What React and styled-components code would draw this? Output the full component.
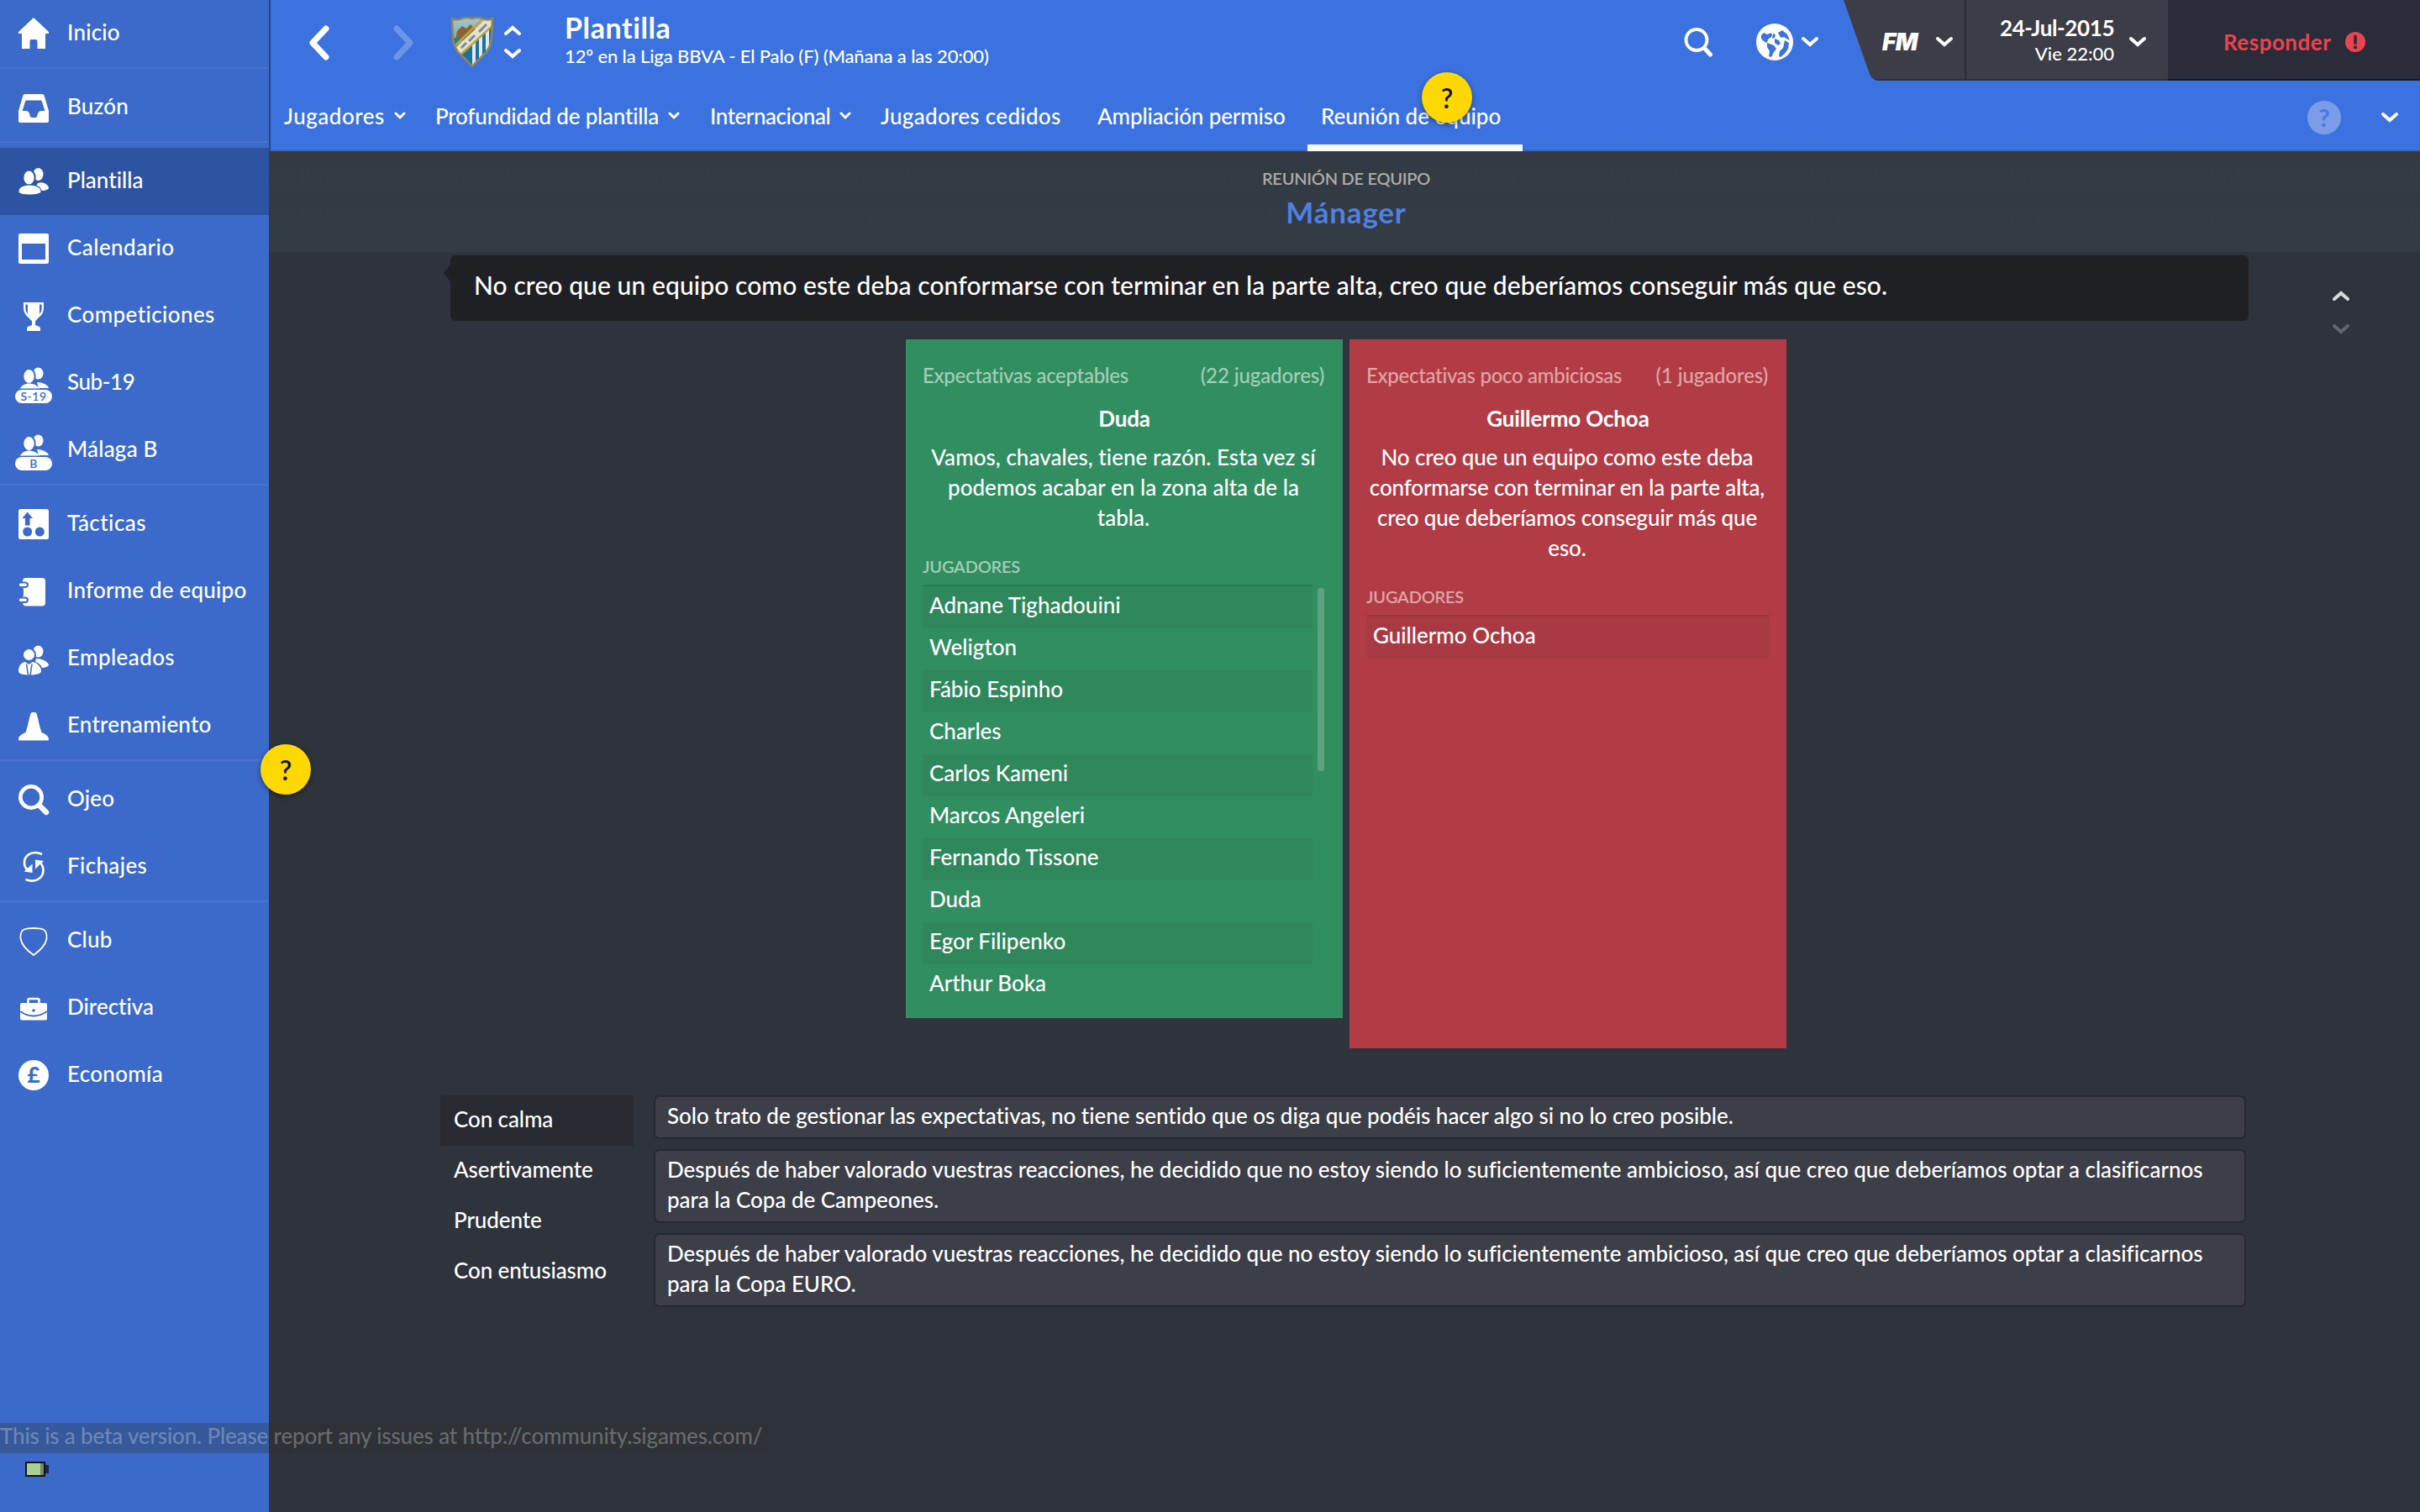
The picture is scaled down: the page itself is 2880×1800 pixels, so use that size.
import React from 'react'
import styled, { createGlobalStyle, css } from 'styled-components'


const BLUE = '#3b6acb'

const GlobalStyle = createGlobalStyle`
  * {
    box-sizing: border-box;
  }
  body {
    margin: 0;
    background: #2f333c;
    color: #fff;
    font-family: Lato, "Open Sans", sans-serif;
    font-size: 26px;
    font-weight: 500;
    font-variant-ligatures: none;
  }
  svg {
    display: block;
    flex: none;
  }
`;

const Screen = styled.div`
  position: relative;
  display: flex;
  width: 2880px;
  height: 1800px;
  overflow: hidden;
  background: #2f333c;
`;

/* ---------- sidebar ---------- */

const Sidebar = styled.nav`
  display: flex;
  flex-direction: column;
  width: 320px;
  flex: none;
  background: ${BLUE};
`;

const Group = styled.div`
  margin-bottom: 6px;
  border-bottom: 2px solid ${p => (p.$last ? 'transparent' : '#4873ce')};
`;

const Item = styled.a`
  --cut: ${p => (p.$active ? '#2d54a2' : BLUE)};
  display: flex;
  align-items: center;
  gap: 16px;
  height: 80px;
  padding-left: 16px;
  background: ${p => (p.$active ? '#2d54a2' : 'transparent')};
`;

const ItemLabel = styled.span`
  line-height: 77px;
  padding-bottom: 3px;
  letter-spacing: ${p => p.$track ?? 0.2}px;
  white-space: nowrap;
`;

const Foot = styled.div`
  margin-top: auto;
  padding: 0 0 42px 30px;
`;

/* ---------- header ---------- */

const Main = styled.main`
  display: flex;
  flex-direction: column;
  flex: 1;
`;

const Header = styled.header`
  height: 180px;
  background: #3c72df;
  border-left: 2px solid #2a4679;
  box-shadow: inset 0 -2px 0 #3c68b8;
`;

const TopRow = styled.div`
  display: flex;
  height: 96px;
  padding-left: 46px;
`;

const NavArrows = styled.div`
  display: flex;
  align-items: center;
  gap: 76px;
  height: 102px;
`;

const Spinner = styled.div`
  display: flex;
  flex-direction: column;
  gap: 16px;
  margin-left: 12px;
  padding-top: 30px;
`;

const CrestBox = styled.div`
  margin-left: 44px;
  padding-top: 19px;
`;

const TitleBlock = styled.div`
  margin-left: 52px;
  padding-top: 13px;
`;

const Title = styled.h1`
  margin: 0;
  font-size: 34px;
  font-weight: 700;
  line-height: 40px;
  letter-spacing: 0.6px;
`;

const Subtitle = styled.div`
  margin-top: 1px;
  font-size: 22px;
  line-height: 26px;
  letter-spacing: -0.13px;
`;

const Tools = styled.div`
  display: flex;
  align-items: center;
  height: 100px;
  margin-left: auto;
  margin-right: 30px;
`;

const Globe = styled.div`
  margin: 0 10px 0 52px;
`;

const Corner = styled.div`
  display: flex;
  width: 686px;
  height: 96px;
  clip-path: path('M0 0 L31 88 Q34 96 43 96 H686 V0 Z');
`;

const CornerCell = styled.div`
  display: flex;
  align-items: center;
  padding-top: 3px;
  width: ${p => p.$width}px;
  padding-left: ${p => p.$left}px;
  background: ${p => (p.$dark ? '#2a2c39' : '#3c3d46')};
  box-shadow: inset 0 -2px 0 ${p => (p.$dark ? '#14172a' : '#2b2f40')};
  border-right: ${p => (p.$divider ? '2px solid #2b2c33' : 'none')};
`;

const FmMark = styled.span`
  width: 64px;
  font-family: Inter, sans-serif;
  font-size: 28px;
  font-weight: 900;
  font-style: italic;
  letter-spacing: -0.5px;
`;

const DateBlock = styled.div`
  width: 136px;
  margin: -3px 18px 0 0;
  text-align: right;
  white-space: nowrap;
`;

const DateText = styled.div`
  font-weight: 700;
  line-height: 32px;
  letter-spacing: -0.4px;
`;

const TimeText = styled.div`
  font-size: 22px;
  line-height: 30px;
`;

const Respond = styled.span`
  margin-right: 17px;
  color: #e9444f;
  font-weight: 700;
  letter-spacing: 0.5px;
`;

const TabRow = styled.div`
  display: flex;
  height: 84px;
`;

const Tab = styled.a`
  display: flex;
  align-items: center;
  gap: 11px;
  width: ${p => p.$width}px;
  padding-left: 16px;
  line-height: 85px;
  letter-spacing: ${p => p.$track}px;
  white-space: nowrap;
  ${p => p.$active && css`
    margin-left: -1px;
    box-shadow: inset 0 -8px 0 #fafbfd;
  `}
`;

const TabTools = styled.div`
  display: flex;
  align-items: center;
  gap: 48px;
  height: 88px;
  margin-left: auto;
  padding-right: 26px;
`;

const HelpDot = styled.div`
  width: 40px;
  height: 40px;
  border-radius: 50%;
  background: #7b9ce8;
  color: #4a78de;
  font-size: 29px;
  font-weight: 700;
  line-height: 39px;
  text-align: center;
`;

/* ---------- meeting ---------- */

const SectionBar = styled.div`
  height: 120px;
  padding: 20px 0 0 4px;
  background: linear-gradient(#343a43, #323b43 50%, #343b44);
  text-align: center;
`;

const SectionLabel = styled.div`
  color: #abaca9;
  font-size: 20px;
  font-weight: 600;
  line-height: 25px;
  letter-spacing: -0.25px;
`;

const SectionTitle = styled.div`
  margin-top: 6px;
  color: #4f80e2;
  font-size: 35px;
  font-weight: 700;
  line-height: 42px;
  letter-spacing: 0.8px;
`;

const SpeechRow = styled.div`
  display: flex;
  gap: 100px;
  height: 82px;
  padding: 4px 0 0 216px;
`;

const Speech = styled.div`
  position: relative;
  width: 2140px;
  height: 78px;
  padding-left: 28px;
  border-radius: 6px;
  background: #1f2024;
  font-size: 30px;
  line-height: 70px;
  letter-spacing: 0.09px;

  &::before {
    content: '';
    position: absolute;
    left: -8px;
    top: 11px;
    border: 10px solid transparent;
    border-left-width: 0;
    border-right: 8px solid #1f2024;
  }
`;

const SpeechNav = styled.div`
  display: flex;
  flex-direction: column;
  gap: 28px;
  padding-top: 42px;
`;

const Panels = styled.div`
  display: flex;
  align-items: flex-start;
  gap: 8px;
  margin-top: 22px;
  padding-left: 758px;
`;

const Panel = styled.section`
  width: 520px;
  min-height: ${p => p.$height}px;
  padding: 28px 20px 14px;
  background: ${p => p.$color};
`;

const PanelHead = styled.div`
  display: flex;
  justify-content: space-between;
  padding: 0 2px 0 0;
  color: ${p => p.$color};
  font-size: 24px;
  line-height: 30px;
  letter-spacing: -0.3px;
`;

const Count = styled.span`
  letter-spacing: -0.1px;
`;

const Speaker = styled.div`
  margin-top: 18px;
  font-weight: 700;
  line-height: 36px;
  letter-spacing: -0.15px;
  text-align: center;
`;

const Quote = styled.p`
  margin: 10px 0 0;
  padding: 0 3px 0 1px;
  line-height: 36px;
  letter-spacing: ${p => p.$track}px;
  text-align: center;
`;

const ListTitle = styled.div`
  margin: 28px 0 10px;
  color: ${p => p.$color};
  font-size: 20px;
  font-weight: 600;
  line-height: 24px;
  letter-spacing: -0.2px;
`;

const ListWrap = styled.div`
  display: flex;
  gap: 6px;
`;

const List = styled.div`
  flex: 1;
  border-top: 2px solid ${p => p.$line};
`;

const Player = styled.div`
  height: 50px;
  padding-left: 8px;
  line-height: 44px;

  &:nth-child(odd) {
    background: ${p => p.$stripe};
  }
`;

const Scrollbar = styled.div`
  width: 8px;
  height: 218px;
  margin: 4px 2px 0 0;
  border-radius: 3px;
  background: #5ea37f;
`;

const Answers = styled.div`
  display: flex;
  gap: 24px;
  padding-left: 204px;
  margin-top: 56px;
`;

const Tones = styled.div`
  width: 230px;
`;

const Tone = styled.div`
  height: 60px;
  padding-left: 16px;
  line-height: 56px;
  letter-spacing: -0.1px;
  background: ${p => (p.$active ? '#272a30' : 'transparent')};
`;

const Replies = styled.div`
  display: flex;
  flex-direction: column;
  gap: 12px;
  width: 1895px;
`;

const Reply = styled.div`
  padding: 4px 13px 8px 14px;
  border: 2px solid #262933;
  border-radius: 7px;
  background: #3c3e48;
  line-height: 36px;
  letter-spacing: -0.03px;
`;

/* ---------- overlays ---------- */

const Hint = styled.div`
  position: absolute;
  left: ${p => p.$x}px;
  top: ${p => p.$y}px;
  width: 60px;
  height: 60px;
  border-radius: 50%;
  background: #ffd802;
  box-shadow: 0 2px 6px rgba(0, 0, 0, 0.45);
  color: #111;
  font-size: 32px;
  font-weight: 600;
  line-height: 61px;
  text-align: center;
`;

const BetaNote = styled.div`
  position: absolute;
  left: 0;
  top: 1694px;
  width: 914px;
  height: 36px;
  background: rgba(45, 48, 40, 0.29);
  color: rgba(255, 255, 255, 0.28);
  line-height: 30px;
  letter-spacing: -0.16px;
  white-space: nowrap;
`;

/* ---------- icons ---------- */

const Glyph = ({ children }) => (
  <svg width="48" height="48" viewBox="0 0 48 48" fill="#fff">{children}</svg>
)

const Chevron = ({ w = 20, h = 12, stroke = 4, up, color = '#fff' }) => (
  <svg width={w} height={h} viewBox={`0 0 ${w} ${h}`} fill="none" stroke={color} strokeWidth={stroke} strokeLinecap="round">
    <path d={up ? `M2 ${h - 2}L${w / 2} 3L${w - 2} ${h - 2}` : `M2 2L${w / 2} ${h - 3}L${w - 2} 2`} />
  </svg>
)

const Arrow = ({ right, opacity = 1 }) => (
  <svg width="24" height="42" viewBox="0 0 24 42" fill="none" stroke="#fff" strokeWidth="7" strokeLinecap="round" strokeLinejoin="round" opacity={opacity}>
    <path d={right ? 'M4 4L20 21L4 38' : 'M20 4L4 21L20 38'} />
  </svg>
)

const Squad = () => (
  <>
    <ellipse cx="29.5" cy="15.5" rx="6" ry="7.5" />
    <path d="M29 26c5-2 12 1 13 5.500c.5 2-6 4-8.500 3.500c-1-3-2-5-6-6z" />
    <ellipse cx="18.500" cy="19.500" rx="7.200" ry="9" stroke="var(--cut)" strokeWidth="2" />
    <path d="M6 36c0-5 6-8 13-8s14 3 14 8c0 2.500-6 4-14 4s-13-1.500-13-4z" stroke="var(--cut)" strokeWidth="1" />
  </>
)

const SquadPill = ({ text }) => (
  <>
    <ellipse cx="29.5" cy="12.500" rx="6" ry="7" />
    <path d="M28 23c6 0 13 3 14 7H30z" />
    <ellipse cx="18.500" cy="16" rx="7.200" ry="9" stroke={BLUE} strokeWidth="2" />
    <path d="M8 30.500c2-4 6-6 11-6s9 2 12 6z" />
    <rect x="2" y="32" width="44" height="16" rx="8" />
    <text x="24" y="45" textAnchor="middle" fontSize="14" fontWeight="600" letterSpacing="0.5" fill={BLUE}>{text}</text>
  </>
)

const icons = {
  home: <path d="M24 5L42 22V24H38V42H28.500V33q0-2-2-2h-5q-2 0-2 2V42H10V24H6V22z" />,
  inbox: <path fillRule="evenodd" d="M13.500 8h21q1.500 0 2 1.500L42 28V40q0 2-2 2H8q-2 0-2-2V28L11.500 9.500q.5-1.500 2-1.500zM15.500 15.500q-1 0-1.300 1L10.500 28H15c2.500 0 4 2 4.500 5q.5 3 2.500 3h4q2 0 2.500-3c.5-3 2-5 4.500-5h4.500L33.800 16.500q-.3-1-1.300-1z" />,
  squad: <Squad />,
  calendar: <path fillRule="evenodd" d="M8 6H40q2 0 2 2V40q0 2-2 2H8q-2 0-2-2V8q0-2 2-2zM10 18V37H38V18z" />,
  cup: (
    <>
      <path d="M17 8H31V20c0 5-2 8-5 10v5c3 1 6 2 6 4v3H16v-3c0-2 3-3 6-4v-5c-3-2-5-5-5-10z" />
      <path d="M18 9.200H13.200V15c0 5 2.500 8 6 10.500M30 9.200h4.800V15c0 5-2.500 8-6 10.500" fill="none" stroke="#fff" strokeWidth="2.400" />
    </>
  ),
  u19: <SquadPill text="S-19" />,
  bteam: <SquadPill text="B" />,
  tactics: (
    <>
      <rect x="6" y="6" width="36" height="36" rx="2.500" />
      <g fill={BLUE}>
        <path d="M16.700 9.500L23 17H19.500v8.500h-5.600V17H10.400z" />
        <circle cx="16.700" cy="33" r="5.500" />
        <circle cx="31.300" cy="33" r="5.500" />
      </g>
    </>
  ),
  report: (
    <>
      <rect x="11" y="8" width="27" height="33.500" rx="4" />
      <g stroke={BLUE} strokeWidth="2">
        <path d="M6 15.500q0-2 3-2h5q3 0 3 2.700t-3 2.700H9q-3 0-3-2z" />
        <path d="M6 33.500q0-2 3-2h5q3 0 3 2.700t-3 2.700H9q-3 0-3-2z" />
      </g>
      <rect x="8" y="20.500" width="4" height="9" fill={BLUE} />
    </>
  ),
  staff: (
    <>
      <ellipse cx="29.5" cy="15.500" rx="6" ry="7" />
      <path d="M27 24c6 0 14 3 15 7.500c0 2-5 3.500-8 3.500c-1-3-4-6-8-7z" />
      <circle cx="18.500" cy="19.500" r="7.500" stroke={BLUE} strokeWidth="2" />
      <path d="M6 39c0-7 4-10.500 8-11l4.500 3l4.500-3c5 1 10 5 10 11c0 3-6 4.500-14 4.500s-13-1.500-13-4.500z" />
      <path d="M15.500 30.500l2 13.500M22 30.500L20 44" stroke={BLUE} strokeWidth="1.600" />
    </>
  ),
  cone: <path d="M20.500 9.500q.5-1.500 2-1.500h3q1.500 0 2 1.500c2 6 3 14 6 22.500c5 2 8.500 4.500 8.500 8q0 1.500-1.500 1.500h-33q-1.500 0-1.500-1.500c0-3.500 3.500-6 8.500-8c3-8.500 4-16.500 6-22.500z" />,
  scout: (
    <g fill="none" stroke="#fff">
      <circle cx="21" cy="21" r="12.700" strokeWidth="4.600" />
      <path d="M31 31l8 8" strokeWidth="6.500" strokeLinecap="round" />
    </g>
  ),
  transfers: (
    <>
      <path d="M34 9C24 4 13 9 13 19c0 3 1 6 3.500 8.500M14.500 39C25 43.500 35.500 38 35.500 28c0-4-1.500-7-4-9" fill="none" stroke="#fff" strokeWidth="2.600" />
      <path d="M12.500 29.500L22.500 31V20.500zM36 17L26 15.500V26.500z" />
    </>
  ),
  club: <path d="M24 9c5 0 9 .5 11.500 1.500c3 1.500 4.500 5.500 4 11C38 30 29 37.500 24 41C19 37.500 10 30 8.500 21.500c-.5-5.500 1-9.500 4-11C15 9.500 19 9 24 9z" fill="none" stroke="#fff" strokeWidth="1.800" />,
  board: (
    <>
      <path d="M17.500 18V14.500q0-1.500 1.500-1.500h10q1.500 0 1.500 1.500V18" fill="none" stroke="#fff" strokeWidth="2.600" />
      <rect x="8" y="18" width="32" height="20.500" rx="2" />
      <path d="M8 28c5 3.500 11 5.500 16 5.500s11-2 16-5.500" fill="none" stroke={BLUE} strokeWidth="1.800" />
      <circle cx="24" cy="27" r="1.800" fill={BLUE} />
    </>
  ),
  money: (
    <>
      <circle cx="24" cy="24" r="18" />
      <text x="24" y="33" textAnchor="middle" fontSize="26" fontWeight="900" fill={BLUE}>£</text>
    </>
  ),
}

const Crest = () => (
  <svg width="52" height="62" viewBox="0 0 52 62">
    <defs>
      <clipPath id="shield"><path d="M2 3Q9 6 14 3Q20 1 26 3Q32 1 38 3Q43 6 50 3C49 26 50 34 42 44Q33 52 26 60Q19 52 10 44C2 34 3 26 2 3z" /></clipPath>
      <linearGradient id="sky" x1="0" y1="0" x2="0" y2="1">
        <stop offset="0" stopColor="#a9c9cf" />
        <stop offset="1" stopColor="#4c8573" />
      </linearGradient>
    </defs>
    <g clipPath="url(#shield)">
      <rect width="52" height="62" fill="url(#sky)" />
      <path d="M8 18l6-6 5 3 5-5 7 7-10 12H6z" fill="#8a6232" />
      <path d="M3 26h11l-5 10H3z" fill="#2f7d7c" />
      <path d="M52 6V62H0V46z" fill="#1f6fa5" />
      <path d="M26 26v36h4V24zM34 20v42h4V17zM42 13v42h4V10z" fill="#dfeaf2" />
      <path d="M6 38L46 0l8 8L11 48z" fill="#e6e3c4" />
      <path d="M4 37L44-2M10 48L54 8" stroke="#bda63c" strokeWidth="2.500" />
      <path d="M13 38l6-6M22 30l7-7M34 19l9-9" stroke="#7d86a8" strokeWidth="3" />
    </g>
    <path d="M2 3Q9 6 14 3Q20 1 26 3Q32 1 38 3Q43 6 50 3C49 26 50 34 42 44Q33 52 26 60Q19 52 10 44C2 34 3 26 2 3z" fill="none" stroke="#8f8856" strokeWidth="2.500" />
  </svg>
)

const SearchIcon = () => (
  <svg width="34" height="36" viewBox="0 0 34 36" fill="none" stroke="#fff">
    <circle cx="15" cy="15.500" r="12.500" strokeWidth="3.800" />
    <path d="M24.500 25.500l7 7.500" strokeWidth="5" strokeLinecap="round" />
  </svg>
)

const GlobeIcon = () => (
  <svg width="44" height="44" viewBox="0 0 44 44">
    <circle cx="22" cy="22" r="22" fill="#fff" />
    <g fill="#3c72df">
      <path d="M6 14l3-3 4 2 5-2 1 4-5 4-1 4-4-2-3-3z" />
      <path d="M13 23l8 3 3 4-3 4-3 6-3-1 1-6-3-5z" />
      <path d="M26 11l5-3 6 5 3 7-4-2-3-2-3 1-2-2z" />
      <path d="M22 18l5 2 2 4-3 2-4-3z" />
      <path d="M34 20l5 3-1 7-4 6-5 4-2-1 1-6 4-4z" />
      <path d="M20 12l3 1-1 4-3 1z" />
    </g>
  </svg>
)

const AlertIcon = () => (
  <svg width="24" height="24" viewBox="0 0 24 24">
    <circle cx="12" cy="12" r="12" fill="#e9444f" />
    <path d="M12 5.500v8" stroke="#2a2c39" strokeWidth="3.600" strokeLinecap="round" />
    <circle cx="12" cy="18.300" r="2.100" fill="#2a2c39" />
  </svg>
)

const Battery = () => (
  <svg width="28" height="18" viewBox="0 0 28 18">
    <rect width="24" height="18" fill="#10161d" />
    <rect x="24" y="4" width="4" height="10" fill="#1c2640" />
    <rect x="2" y="2" width="16" height="14" fill="#a9cf93" />
    <rect x="18" y="2" width="4" height="14" fill="#6f8a66" />
  </svg>
)

/* ---------- data ---------- */

const menu = [
  [{ icon: 'home', label: 'Inicio', track: 0.2 }],
  [{ icon: 'inbox', label: 'Buzón', track: 0.2 }],
  [
    { icon: 'squad', label: 'Plantilla', active: true, track: 0 },
    { icon: 'calendar', label: 'Calendario', track: 0.45 },
    { icon: 'cup', label: 'Competiciones', track: 0.4 },
    { icon: 'u19', label: 'Sub-19', track: -0.4 },
    { icon: 'bteam', label: 'Málaga B' },
  ],
  [
    { icon: 'tactics', label: 'Tácticas', track: 0.45 },
    { icon: 'report', label: 'Informe de equipo' },
    { icon: 'staff', label: 'Empleados', track: 0.4 },
    { icon: 'cone', label: 'Entrenamiento' },
  ],
  [
    { icon: 'scout', label: 'Ojeo' },
    { icon: 'transfers', label: 'Fichajes', track: 0.35 },
  ],
  [
    { icon: 'club', label: 'Club' },
    { icon: 'board', label: 'Directiva', track: 0 },
    { icon: 'money', label: 'Economía', track: 0.3 },
  ],
]

const tabs = [
  { label: 'Jugadores', width: 180, track: 0.5, more: true },
  { label: 'Profundidad de plantilla', width: 327, track: -0.22, more: true },
  { label: 'Internacional', width: 203, track: -0.45, more: true },
  { label: 'Jugadores cedidos', width: 258, track: 0.3 },
  { label: 'Ampliación permiso', width: 267, track: -0.12 },
  { label: 'Reunión de equipo', width: 256, track: 0, active: true },
]

const groups = [
  {
    title: 'Expectativas aceptables',
    count: '(22 jugadores)',
    speaker: 'Duda',
    quote: 'Vamos, chavales, tiene razón. Esta vez sí podemos acabar en la zona alta de la tabla.',
    players: [
      'Adnane Tighadouini', 'Weligton', 'Fábio Espinho', 'Charles', 'Carlos Kameni',
      'Marcos Angeleri', 'Fernando Tissone', 'Duda', 'Egor Filipenko', 'Arthur Boka',
    ],
    scroll: true,
    height: 808,
    track: 0.03,
    color: '#318e61',
    stripe: '#2f875c',
    line: '#2a7a53',
    muted: '#a3cfb6',
  },
  {
    title: 'Expectativas poco ambiciosas',
    count: '(1 jugadores)',
    speaker: 'Guillermo Ochoa',
    quote: 'No creo que un equipo como este deba conformarse con terminar en la parte alta, creo que deberíamos conseguir más que eso.',
    players: ['Guillermo Ochoa'],
    height: 844,
    track: -0.15,
    color: '#b23c46',
    stripe: '#a93a43',
    line: '#9c343d',
    muted: '#e0a5a5',
  },
]

const tones = ['Con calma', 'Asertivamente', 'Prudente', 'Con entusiasmo']

const replies = [
  'Solo trato de gestionar las expectativas, no tiene sentido que os diga que podéis hacer algo si no lo creo posible.',
  'Después de haber valorado vuestras reacciones, he decidido que no estoy siendo lo suficientemente ambicioso, así que creo que deberíamos optar a clasificarnos para la Copa de Campeones.',
  'Después de haber valorado vuestras reacciones, he decidido que no estoy siendo lo suficientemente ambicioso, así que creo que deberíamos optar a clasificarnos para la Copa EURO.',
]

const App = () => {
  return (
    <Screen>
      <GlobalStyle />
      <Sidebar>
        {menu.map((group, i) => (
          <Group key={i} $last={i === menu.length - 1}>
            {group.map(item => (
              <Item key={item.label} $active={item.active}>
                <Glyph>{icons[item.icon]}</Glyph>
                <ItemLabel $track={item.track}>{item.label}</ItemLabel>
              </Item>
            ))}
          </Group>
        ))}
        <Foot><Battery /></Foot>
      </Sidebar>

      <Main>
        <Header>
          <TopRow>
            <NavArrows>
              <Arrow />
              <Arrow right opacity={0.25} />
            </NavArrows>
            <CrestBox><Crest /></CrestBox>
            <Spinner>
              <Chevron up />
              <Chevron />
            </Spinner>
            <TitleBlock>
              <Title>Plantilla</Title>
              <Subtitle>12º en la Liga BBVA - El Palo (F) (Mañana a las 20:00)</Subtitle>
            </TitleBlock>
            <Tools>
              <SearchIcon />
              <Globe><GlobeIcon /></Globe>
              <Chevron />
            </Tools>
            <Corner>
              <CornerCell $width={146} $left={46} $divider>
                <FmMark>FM</FmMark>
                <Chevron />
              </CornerCell>
              <CornerCell $width={240} $left={40}>
                <DateBlock>
                  <DateText>24-Jul-2015</DateText>
                  <TimeText>Vie 22:00</TimeText>
                </DateBlock>
                <Chevron />
              </CornerCell>
              <CornerCell $width={300} $left={66} $dark>
                <Respond>Responder</Respond>
                <AlertIcon />
              </CornerCell>
            </Corner>
          </TopRow>
          <TabRow>
            {tabs.map(tab => (
              <Tab key={tab.label} $width={tab.width} $track={tab.track} $active={tab.active}>
                {tab.label}
                {tab.more && <Chevron w={14} h={10} stroke={3} />}
              </Tab>
            ))}
            <TabTools>
              <HelpDot>?</HelpDot>
              <Chevron />
            </TabTools>
          </TabRow>
        </Header>

        <SectionBar>
          <SectionLabel>REUNIÓN DE EQUIPO</SectionLabel>
          <SectionTitle>Mánager</SectionTitle>
        </SectionBar>

        <SpeechRow>
          <Speech>No creo que un equipo como este deba conformarse con terminar en la parte alta, creo que deberíamos conseguir más que eso.</Speech>
          <SpeechNav>
            <Chevron up color="#d9dadc" />
            <Chevron color="#62656d" />
          </SpeechNav>
        </SpeechRow>

        <Panels>
          {groups.map(g => (
            <Panel key={g.title} $color={g.color} $height={g.height}>
              <PanelHead $color={g.muted}>
                <span>{g.title}</span>
                <Count>{g.count}</Count>
              </PanelHead>
              <Speaker>{g.speaker}</Speaker>
              <Quote $track={g.track}>{g.quote}</Quote>
              <ListTitle $color={g.muted}>JUGADORES</ListTitle>
              <ListWrap>
                <List $line={g.line}>
                  {g.players.map(name => <Player key={name} $stripe={g.stripe}>{name}</Player>)}
                </List>
                {g.scroll && <Scrollbar />}
              </ListWrap>
            </Panel>
          ))}
        </Panels>

        <Answers>
          <Tones>
            {tones.map((tone, i) => <Tone key={tone} $active={i === 0}>{tone}</Tone>)}
          </Tones>
          <Replies>
            {replies.map(reply => <Reply key={reply}>{reply}</Reply>)}
          </Replies>
        </Answers>
      </Main>

      <Hint $x={1692} $y={86}>?</Hint>
      <Hint $x={310} $y={886}>?</Hint>
      <BetaNote>This is a beta version. Please report any issues at http://community.sigames.com/</BetaNote>
    </Screen>
  )
}

export default App
